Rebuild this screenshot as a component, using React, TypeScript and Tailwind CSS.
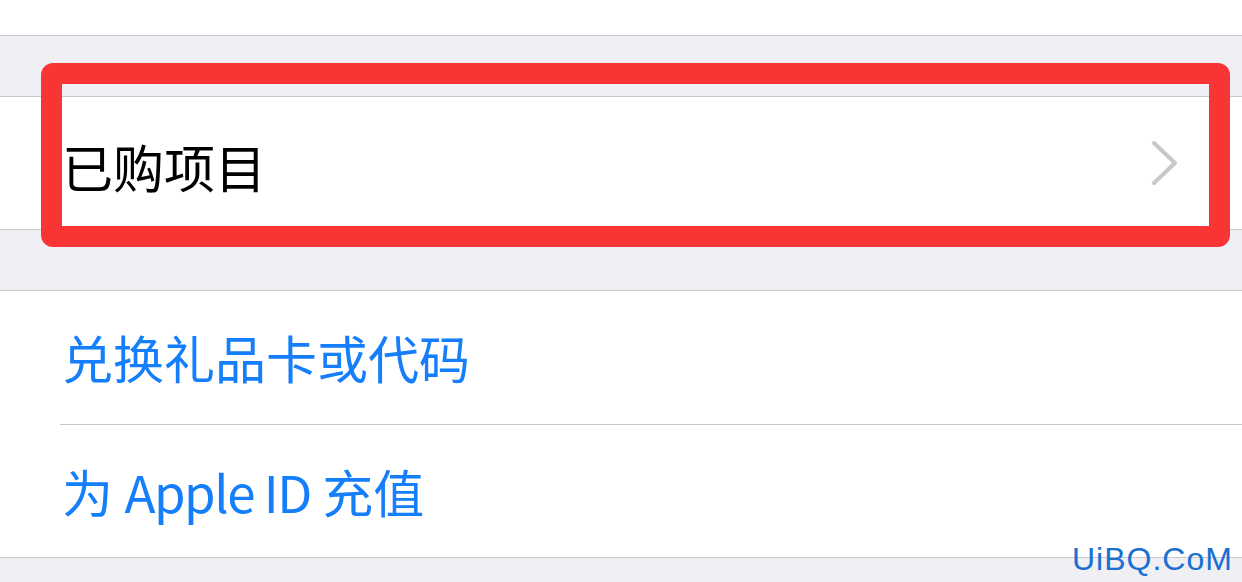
const font = { fontFamily: '"Noto Sans CJK SC", "Noto Sans", sans-serif' };

const Chevron = () => (
  <svg width="30" height="46" viewBox="0 0 30 46" fill="none">
    <path d="M4 3 L25 23 L4 43" stroke="#c7c7cc" strokeWidth="4" strokeLinecap="round" strokeLinejoin="round" />
  </svg>
);

export default function App() {
  return (
    <div
      className="relative w-[1242px] h-[582px] overflow-hidden bg-[#efeff4]"
      style={font}
    >
      <div className="h-[36px] bg-white border-b border-[#c8c7cc]" />
      <div className="h-[60px]" />

      <div className="h-[134px] bg-white border-y border-[#c8c7cc] flex items-center justify-between pl-[62px] pr-[62px]">
        <span className="text-[51px] leading-none text-black pt-[6px]">已购项目</span>
        <Chevron />
      </div>

      <div className="h-[60px]" />

      <div className="bg-white border-y border-[#c8c7cc]">
        <div className="h-[133px] flex items-center pl-[62px]">
          <span className="text-[51px] leading-none text-[#147efb]">兑换礼品卡或代码</span>
        </div>
        <div className="ml-[60px] border-t border-[#c8c7cc]" />
        <div className="h-[132px] flex items-center pl-[62px]">
          <span className="text-[51px] leading-none text-[#147efb]">
            为 <span className="tracking-[-1.5px]">Apple ID</span> 充值
          </span>
        </div>
      </div>

      <div className="absolute left-[41px] top-[63px] w-[1189px] h-[184px] border-[21px] border-[#f93434] rounded-[12px]" />

      <div
        className="absolute left-[1072px] top-[543px] text-[32px] leading-none text-[#1a6fd0] tracking-[1px]"
        style={{ fontFamily: '"Liberation Sans", sans-serif' }}
      >
        UiBQ.CoM
      </div>
    </div>
  );
}
